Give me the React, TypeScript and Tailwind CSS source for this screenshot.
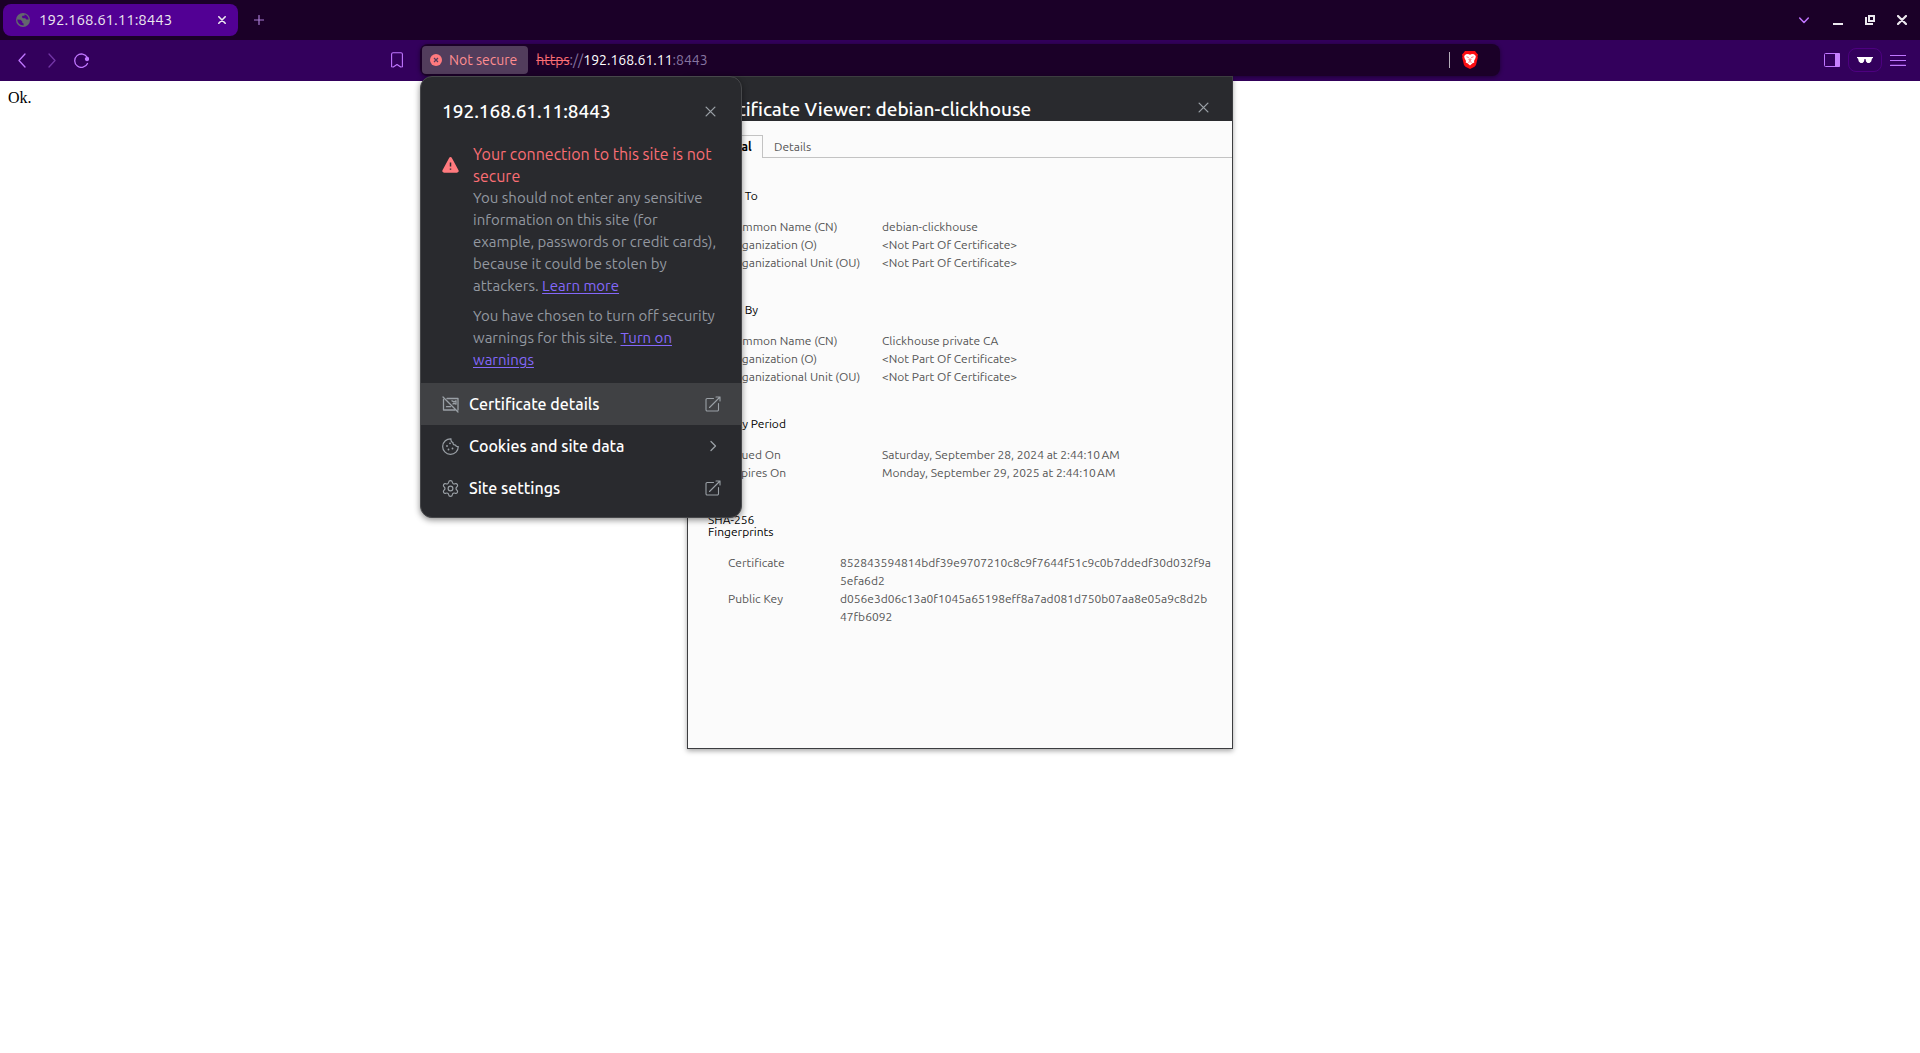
import React from "react";
import { Settings } from "lucide-react";

type Row = [string, string];

const sections: { title: string; rows: Row[] }[] = [
  {
    title: "Issued To",
    rows: [
      ["Common Name (CN)", "debian-clickhouse"],
      ["Organization (O)", "<Not Part Of Certificate>"],
      ["Organizational Unit (OU)", "<Not Part Of Certificate>"],
    ],
  },
  {
    title: "Issued By",
    rows: [
      ["Common Name (CN)", "Clickhouse private CA"],
      ["Organization (O)", "<Not Part Of Certificate>"],
      ["Organizational Unit (OU)", "<Not Part Of Certificate>"],
    ],
  },
  {
    title: "Validity Period",
    rows: [
      ["Issued On", "Saturday, September 28, 2024 at 2:44:10\u202fAM"],
      ["Expires On", "Monday, September 29, 2025 at 2:44:10\u202fAM"],
    ],
  },
];

const fingerprints: Row[] = [
  ["Certificate", "852843594814bdf39e9707210c8c9f7644f51c9c0b7ddedf30d032f9a5efa6d2"],
  ["Public Key", "d056e3d06c13a0f1045a65198eff8a7ad081d750b07aa8e05a9c8d2b47fb6092"],
];

const stroke = { fill: "none", stroke: "currentColor", strokeLinecap: "round", strokeLinejoin: "round" } as const;

function Close({ className, width = 1.3 }: { className: string; width?: number }) {
  return (
    <svg viewBox="0 0 10 10" className={className} {...stroke} strokeWidth={width}>
      <path d="M1 1l8 8M9 1l-8 8" />
    </svg>
  );
}

function Launch() {
  return (
    <svg viewBox="0 0 16 16" className="size-4" {...stroke} strokeWidth="1.1">
      <path d="M8.500 2.500H2.200A1.200 1.200 0 0 0 1 3.700v10.100A1.200 1.200 0 0 0 2.200 15h10.100a1.200 1.200 0 0 0 1.200-1.200V7.500M11 1h4v4M15 1L4.500 11.500" />
    </svg>
  );
}

function TabStrip() {
  return (
    <div className="flex h-10 items-center bg-[#1b0028] pl-[3px] pr-[13px] text-[#ece8ef]">
      <div className="flex h-8 w-[235px] items-center rounded-lg bg-[#520094] pl-[13px] pr-3">
        <svg viewBox="0 0 14 14" className="mr-[9px] size-[14px]">
          <circle cx="7" cy="7" r="7" fill="#63676d" />
          <path d="M1.300 6.500l3.300.300 1.700 1.700v1.300l1.300.700v2C4 12.500 1.300 9.700 1.300 6.500zM8.500 1.500v1.300H6.500L5.800 4 7 5.200H9.300l.900 1.300h2.500c0-2.700-2-4.500-4.200-5z" fill="#520094" />
        </svg>
        <span className="flex-1 text-[15px]">192.168.61.11:8443</span>
        <button aria-label="Close tab"><Close className="size-2" width={2} /></button>
      </div>
      <button aria-label="New tab" className="ml-4 text-[#a87bd2]">
        <svg viewBox="0 0 10 10" className="size-[10px]" {...stroke} strokeWidth="1.200"><path d="M5 .5v9M.5 5h9" /></svg>
      </button>
      <div className="ml-auto flex items-center gap-[22px]">
        <button aria-label="Search tabs" className="mr-[2px] text-[#c076ff]">
          <svg viewBox="0 0 10 10" className="size-[10px]" {...stroke} strokeWidth="1.500"><path d="M.7 3l4.300 4.500L9.300 3" /></svg>
        </button>
        <button aria-label="Minimize">
          <svg viewBox="0 0 10 10" className="size-[10px]"><path d="M0 8h10v2H0z" fill="currentColor" /></svg>
        </button>
        <button aria-label="Restore">
          <svg viewBox="0 0 10 10" className="size-[10px]" fill="none" stroke="currentColor" strokeWidth="2"><path d="M4 1h5v5H4zM1 2v7h7" /></svg>
        </button>
        <button aria-label="Close window"><Close className="size-[10px]" width={2.2} /></button>
      </div>
    </div>
  );
}

function SiteInfo() {
  return (
    <section aria-label="Site information" className="absolute left-0 top-8 z-20 w-[322px] rounded-xl border border-[#47484b] bg-[#292a2e] pb-2 shadow-[0_2px_6px_rgba(0,0,0,0.45)]">
      <div className="flex items-center pl-[21px] pr-[25px] pt-5">
        <h2 className="flex-1 text-[19px] font-medium leading-7 text-white">192.168.61.11:8443</h2>
        <button aria-label="Close" className="text-[#9aa0a6]"><Close className="size-[11px]" width={1.2} /></button>
      </div>
      <div className="flex pb-3 pl-[21px] pr-5 pt-[18px] text-[#9398a0]">
        <svg viewBox="0 0 17 16" className="mr-[14px] mt-[14px] h-4 w-[17px] shrink-0">
          <path d="M7.100.900a1.600 1.600 0 0 1 2.800 0l6.600 12.300a1.700 1.700 0 0 1-1.500 2.500H2a1.700 1.700 0 0 1-1.500-2.500z" fill="#ff7a7e" />
          <path d="M8.500 5.500v4M8.500 11.500v1.300" stroke="#292a2e" strokeWidth="1.500" />
        </svg>
        <div className="text-[15px] leading-[22px]">
          <p className="text-base leading-[22px] text-[#fb6e74]">Your connection to this site is not secure</p>
          <p>
            You should not enter any sensitive information on this site (for example, passwords or credit cards), because it could be stolen by attackers.{" "}
            <a href="#learn" className="text-[#8468fb] underline underline-offset-2">Learn more</a>
          </p>
          <p className="mt-2">
            You have chosen to turn off security warnings for this site.{" "}
            <a href="#warnings" className="text-[#8468fb] underline underline-offset-2">Turn on warnings</a>
          </p>
        </div>
      </div>
      <div className="text-[#9aa0a6]">
        <button className="flex h-[42px] w-full items-center bg-[#404144] pl-[21px] pr-5 text-left">
          <svg viewBox="0 0 17 17" className="mr-[10px] size-[17px]" {...stroke} strokeWidth="1.300">
            <path d="M5 2.500h11v11.500M13 14H1.500V3.500M1 1l15 15M4.500 10.700h4M10 4.800l2 1 2-1v3.400l-2-.8-1 .5" />
          </svg>
          <span className="flex-1 text-base font-medium text-white">Certificate details</span>
          <Launch />
        </button>
        <button className="flex h-[42px] w-full items-center pl-[21px] pr-5 text-left">
          <svg viewBox="0 0 17 17" className="mr-[10px] size-[17px]" {...stroke} strokeWidth="1.200">
            <path d="M9 .8A7.800 7.800 0 1 0 16.300 8.500c-1.500.400-2.500-.300-2.800-1.500-1.700.100-2.700-.800-2.500-2.300C9.500 4.300 8.700 2.800 9 .8z" />
            <path d="M8 5.300h.01M5 8h.01M10.500 10.500h.01M6.500 11.500h.01" strokeWidth="1.800" />
          </svg>
          <span className="flex-1 text-base font-medium text-white">Cookies and site data</span>
          <svg viewBox="0 0 16 16" className="size-4" {...stroke} strokeWidth="1.300"><path d="M6 3.500L10.500 8 6 12.500" /></svg>
        </button>
        <button className="flex h-[42px] w-full items-center pl-5 pr-5 text-left">
          <Settings className="mr-[9px] size-[19px]" strokeWidth={1.5} />
          <span className="flex-1 text-base font-medium text-white">Site settings</span>
          <Launch />
        </button>
      </div>
    </section>
  );
}

function Toolbar() {
  return (
    <div className="flex h-[41px] items-center bg-[#33005c] pb-px text-[#c076ff]">
      <div className="flex-1">
        <div className="flex items-center justify-between pl-[14px] pr-[17px]">
          <div className="flex items-center gap-[15px]">
            <button aria-label="Back">
              <svg viewBox="0 0 15 15" className="size-[15px]" {...stroke} strokeWidth="1.300"><path d="M11 1L5 7.500l6 6.500" /></svg>
            </button>
            <button aria-label="Forward" className="opacity-45">
              <svg viewBox="0 0 15 15" className="size-[15px]" {...stroke} strokeWidth="1.300"><path d="M5 1l6 6.500L5 14" /></svg>
            </button>
            <button aria-label="Reload">
              <svg viewBox="0 0 15 15" className="size-[15px]" {...stroke} strokeWidth="1.300">
                <path d="M13.500 10.500A6.700 6.700 0 1 1 13.300 4.500" /><circle cx="13" cy="6" r="1.500" fill="currentColor" />
              </svg>
            </button>
          </div>
          <button aria-label="Bookmark this page">
            <svg viewBox="0 0 12 16" className="h-4 w-3" {...stroke} strokeWidth="1.100"><path d="M2 .8h8A1.400 1.400 0 0 1 11.400 2v12.800L9.700 15 6 12.500 2.300 15l-1.700-.2V2A1.400 1.400 0 0 1 2 .8z" /></svg>
          </button>
        </div>
      </div>
      <div className="relative flex h-8 w-[1080px] items-center rounded-lg bg-[#1b0028] pl-[2px] pr-[22px] text-sm shadow-[0_1px_4px_rgba(0,0,0,0.45)]">
        <button className="flex h-7 items-center gap-[7px] rounded bg-[#523d5c] pl-2 pr-[11px] text-[#ff8d91]">
          <svg viewBox="0 0 12 12" className="size-3"><circle cx="6" cy="6" r="6" fill="#ff7a7e" /><path d="M4 4l4 4M8 4l-4 4" stroke="#523d5c" strokeWidth="1.200" /></svg>
          Not secure
        </button>
        <span className="ml-2 flex-1 text-[#8675a0]">
          <span className="text-[#fb6e74] line-through">https</span>://<span className="text-white">192.168.61.11</span>:8443
        </span>
        <span className="mr-3 h-4 w-px bg-[#b5adba]" />
        <button aria-label="Brave Shields">
          <svg viewBox="0 0 16 18" className="h-[18px] w-4">
            <path d="M3 0h10l1.500 2L16 3.500l-.500 2 .3 1L14 14l-1.500 1.800L8 18l-4.500-2.200L2 14 .2 6.500l.3-1-.5-2L1.500 2z" fill="#fb0d12" />
            <path d="M4 3.200L6 3l2 .700L10 3l2 .200L13.800 5l-.300 2-1.500 3 .3 1.500-1.800.700L8 14.500l-2.500-2.300-1.800-.700L4 10 2.500 7l-.300-2z" fill="#fff" />
            <path d="M4.500 5.800l2.300.700M11.500 5.800l-2.300.700M7.300 7.500l-.3 1.500 1 .5 1-.5-.3-1.500M6.300 11.300L8 10.700l1.700.6" fill="none" stroke="#fb0d12" strokeWidth=".6" />
          </svg>
        </button>
        <SiteInfo />
      </div>
      <div className="flex-1">
        <div className="flex items-center justify-end gap-2 pr-[14px]">
          <button aria-label="Sidebar">
            <svg viewBox="0 0 16 14" className="h-[14px] w-4" fill="none" stroke="currentColor"><rect x=".5" y=".5" width="15" height="13" rx="1" /><path d="M11 0h4a1 1 0 0 1 1 1v12a1 1 0 0 1-1 1h-4z" fill="#c880ff" stroke="none" /></svg>
          </button>
          <button aria-label="Private window" className="flex h-6 w-[34px] items-center justify-center rounded-lg border border-[#4d0080] text-white">
            <svg viewBox="0 0 16 6" className="h-[6px] w-4"><path d="M0 0h16v1l-1 .5-.8 3L12.500 6H10.500L9 4.500 8.500 2h-1L7 4.500 5.500 6h-2L1.800 4.500l-.8-3L0 1z" fill="currentColor" /></svg>
          </button>
          <button aria-label="Menu">
            <svg viewBox="0 0 16 12" className="h-3 w-4" {...stroke} strokeWidth="1.200"><path d="M.5 1.500h15M.5 6.500h15M.5 11.400h15" /></svg>
          </button>
        </div>
      </div>
    </div>
  );
}

function CertificateViewer() {
  return (
    <section role="dialog" aria-label="Certificate Viewer" className="absolute left-1/2 top-[76px] z-10 w-[546px] -translate-x-1/2 border border-[#3c3d40] bg-[#fbfbfb] pb-[122px] text-xs leading-[18px] text-[#555555] shadow-[0_2px_5px_rgba(0,0,0,0.35)]">
      <header className="flex h-11 items-end justify-between bg-[#292a2e] pl-5 pr-[23px]">
        <h1 className="text-[19px] font-medium leading-6 text-white">Certificate Viewer: debian-clickhouse</h1>
        <button aria-label="Close dialog" className="mb-2 text-[#9aa0a6]"><Close className="size-[11px]" width={1.2} /></button>
      </header>
      <div role="tablist" className="mt-[14px] flex h-[23px]">
        <span className="w-2 border-b border-[#c3c3c3]" />
        <button role="tab" aria-selected="true" className="w-[67px] border border-b-0 border-[#c3c3c3] font-bold text-black">General</button>
        <button role="tab" aria-selected="false" className="border-b border-[#c3c3c3] pl-[11px] pt-px">Details</button>
        <span className="flex-1 border-b border-[#c3c3c3]" />
      </div>
      <div className="px-5 pt-8">
        {sections.map((s) => (
          <section key={s.title} className="mb-8">
            <h3 className="mb-4 leading-3 text-black">{s.title}</h3>
            <dl>
              {s.rows.map(([k, v]) => (
                <div key={k} className="flex pl-5"><dt className="w-[154px]">{k}</dt><dd className="flex-1">{v}</dd></div>
              ))}
            </dl>
          </section>
        ))}
        <section>
          <h3 className="mb-4 w-24 leading-3 text-black">SHA-256 Fingerprints</h3>
          <dl>
            {fingerprints.map(([k, v]) => (
              <div key={k} className="flex pl-5"><dt className="w-28 shrink-0">{k}</dt><dd className="min-w-0 flex-1 break-all">{v}</dd></div>
            ))}
          </dl>
        </section>
      </div>
    </section>
  );
}

export default function App() {
  return (
    <div className="relative min-h-screen bg-white font-['Ubuntu','Noto_Sans',sans-serif]">
      <TabStrip />
      <Toolbar />
      <main className="p-2 font-['Liberation_Serif',serif] text-base leading-[18px] text-black">Ok.</main>
      <CertificateViewer />
    </div>
  );
}
